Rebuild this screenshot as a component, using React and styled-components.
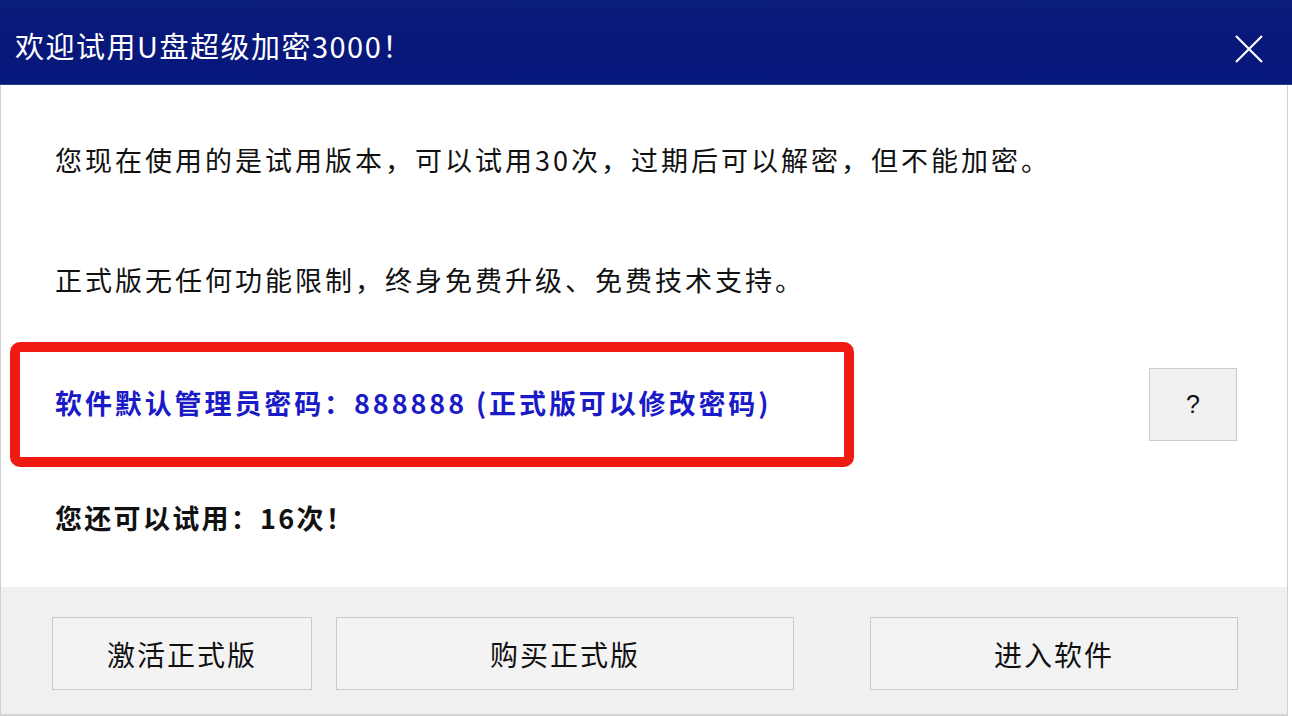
import React from "react";
import styled, { createGlobalStyle } from "styled-components";

const GlobalStyle = createGlobalStyle`
  html, body {
    margin: 0;
    padding: 0;
    background: #ffffff;
  }
  body {
    font-family: "Noto Sans CJK SC", "Noto Sans", "Liberation Sans", sans-serif;
  }
`;

const CloseIcon = () => (
  <svg width="30" height="30" viewBox="0 0 30 30">
    <path d="M2 2 L28 28 M28 2 L2 28" stroke="#ffffff" strokeWidth="2.2" fill="none" />
  </svg>
);

const App = () => {
  return (
    <>
      <GlobalStyle />
      <Window>
        <TitleBar>
          <Title>欢迎试用U盘超级加密3000！</Title>
          <CloseButton aria-label="关闭">
            <CloseIcon />
          </CloseButton>
        </TitleBar>
        <Body>
          <Line>您现在使用的是试用版本，可以试用30次，过期后可以解密，但不能加密。</Line>
          <Line $gap={70}>正式版无任何功能限制，终身免费升级、免费技术支持。</Line>
          <NoticeRow>
            <Highlight>
              <PasswordText>软件默认管理员密码：888888 (正式版可以修改密码)</PasswordText>
            </Highlight>
            <HelpButton>?</HelpButton>
          </NoticeRow>
          <Line $gap={26} $bold $spacing={2.3}>您还可以试用：16次！</Line>
        </Body>
        <Footer>
          <Button $width={260}>激活正式版</Button>
          <Button $width={458} $left={24}>购买正式版</Button>
          <Button $width={368} $left={76}>进入软件</Button>
        </Footer>
      </Window>
    </>
  );
};

export default App;

const Window = styled.div`
  width: 1292px;
  height: 716px;
  display: flex;
  flex-direction: column;
  overflow: hidden;
`;

const TitleBar = styled.div`
  height: 85px;
  flex: none;
  display: flex;
  align-items: center;
  justify-content: space-between;
  padding: 0 28px 0 15px;
  background: linear-gradient(180deg, #0b1d7a 0%, #07177a 60%, #08197e 100%);
  border-bottom: 1px solid #2a3c93;
  box-sizing: border-box;
`;

const Title = styled.div`
  color: #ffffff;
  font-size: 29px;
  line-height: 40px;
  margin-top: 6px;
  letter-spacing: 1.5px;
`;

const CloseButton = styled.div`
  width: 30px;
  height: 30px;
  display: flex;
  margin-top: 14px;
`;

const Body = styled.div`
  flex: 1;
  background: #ffffff;
  padding-top: 50px;
  border-left: 1px solid #d0d0d0;
  border-right: 1px solid #d0d0d0;
  margin-right: 4px;
  box-sizing: border-box;
`;

const Line = styled.div`
  height: 50px;
  line-height: 50px;
  margin-top: ${(p) => p.$gap || 0}px;
  padding-left: 54px;
  font-size: 27px;
  letter-spacing: ${(p) => p.$spacing ?? 3}px;
  font-weight: ${(p) => (p.$bold ? 700 : 400)};
  color: #111111;
  white-space: nowrap;
`;

const NoticeRow = styled.div`
  display: flex;
  align-items: center;
  margin-top: 37px;
  padding-left: 9px;
  padding-right: 50px;
`;

const Highlight = styled.div`
  width: 844px;
  height: 125px;
  box-sizing: border-box;
  border: 10px solid #ef1b12;
  border-radius: 10px;
  display: flex;
  align-items: center;
  padding-left: 35px;
`;

const PasswordText = styled.div`
  font-size: 27px;
  letter-spacing: 2.9px;
  font-weight: 700;
  color: #1a1ac6;
  white-space: pre;
  margin-top: -4px;
`;

const HelpButton = styled.div`
  margin-left: auto;
  width: 88px;
  height: 73px;
  box-sizing: border-box;
  border: 1px solid #cccccc;
  background: #f1f1f1;
  display: flex;
  align-items: center;
  justify-content: center;
  font-family: "Liberation Sans", sans-serif;
  font-size: 25px;
  color: #111111;
`;

const Footer = styled.div`
  height: 129px;
  flex: none;
  display: flex;
  align-items: flex-start;
  padding: 30px 0 0 51px;
  background: #f0f0f0;
  border-left: 1px solid #d0d0d0;
  border-right: 1px solid #d0d0d0;
  border-bottom: 2px solid #d4d4d4;
  margin-right: 4px;
  box-sizing: border-box;
`;

const Button = styled.div`
  width: ${(p) => p.$width}px;
  margin-left: ${(p) => p.$left || 0}px;
  height: 73px;
  box-sizing: border-box;
  border: 1px solid #c9c9c9;
  background: #f3f3f3;
  display: flex;
  align-items: center;
  justify-content: center;
  font-size: 28px;
  letter-spacing: 2px;
  color: #111111;
`;
